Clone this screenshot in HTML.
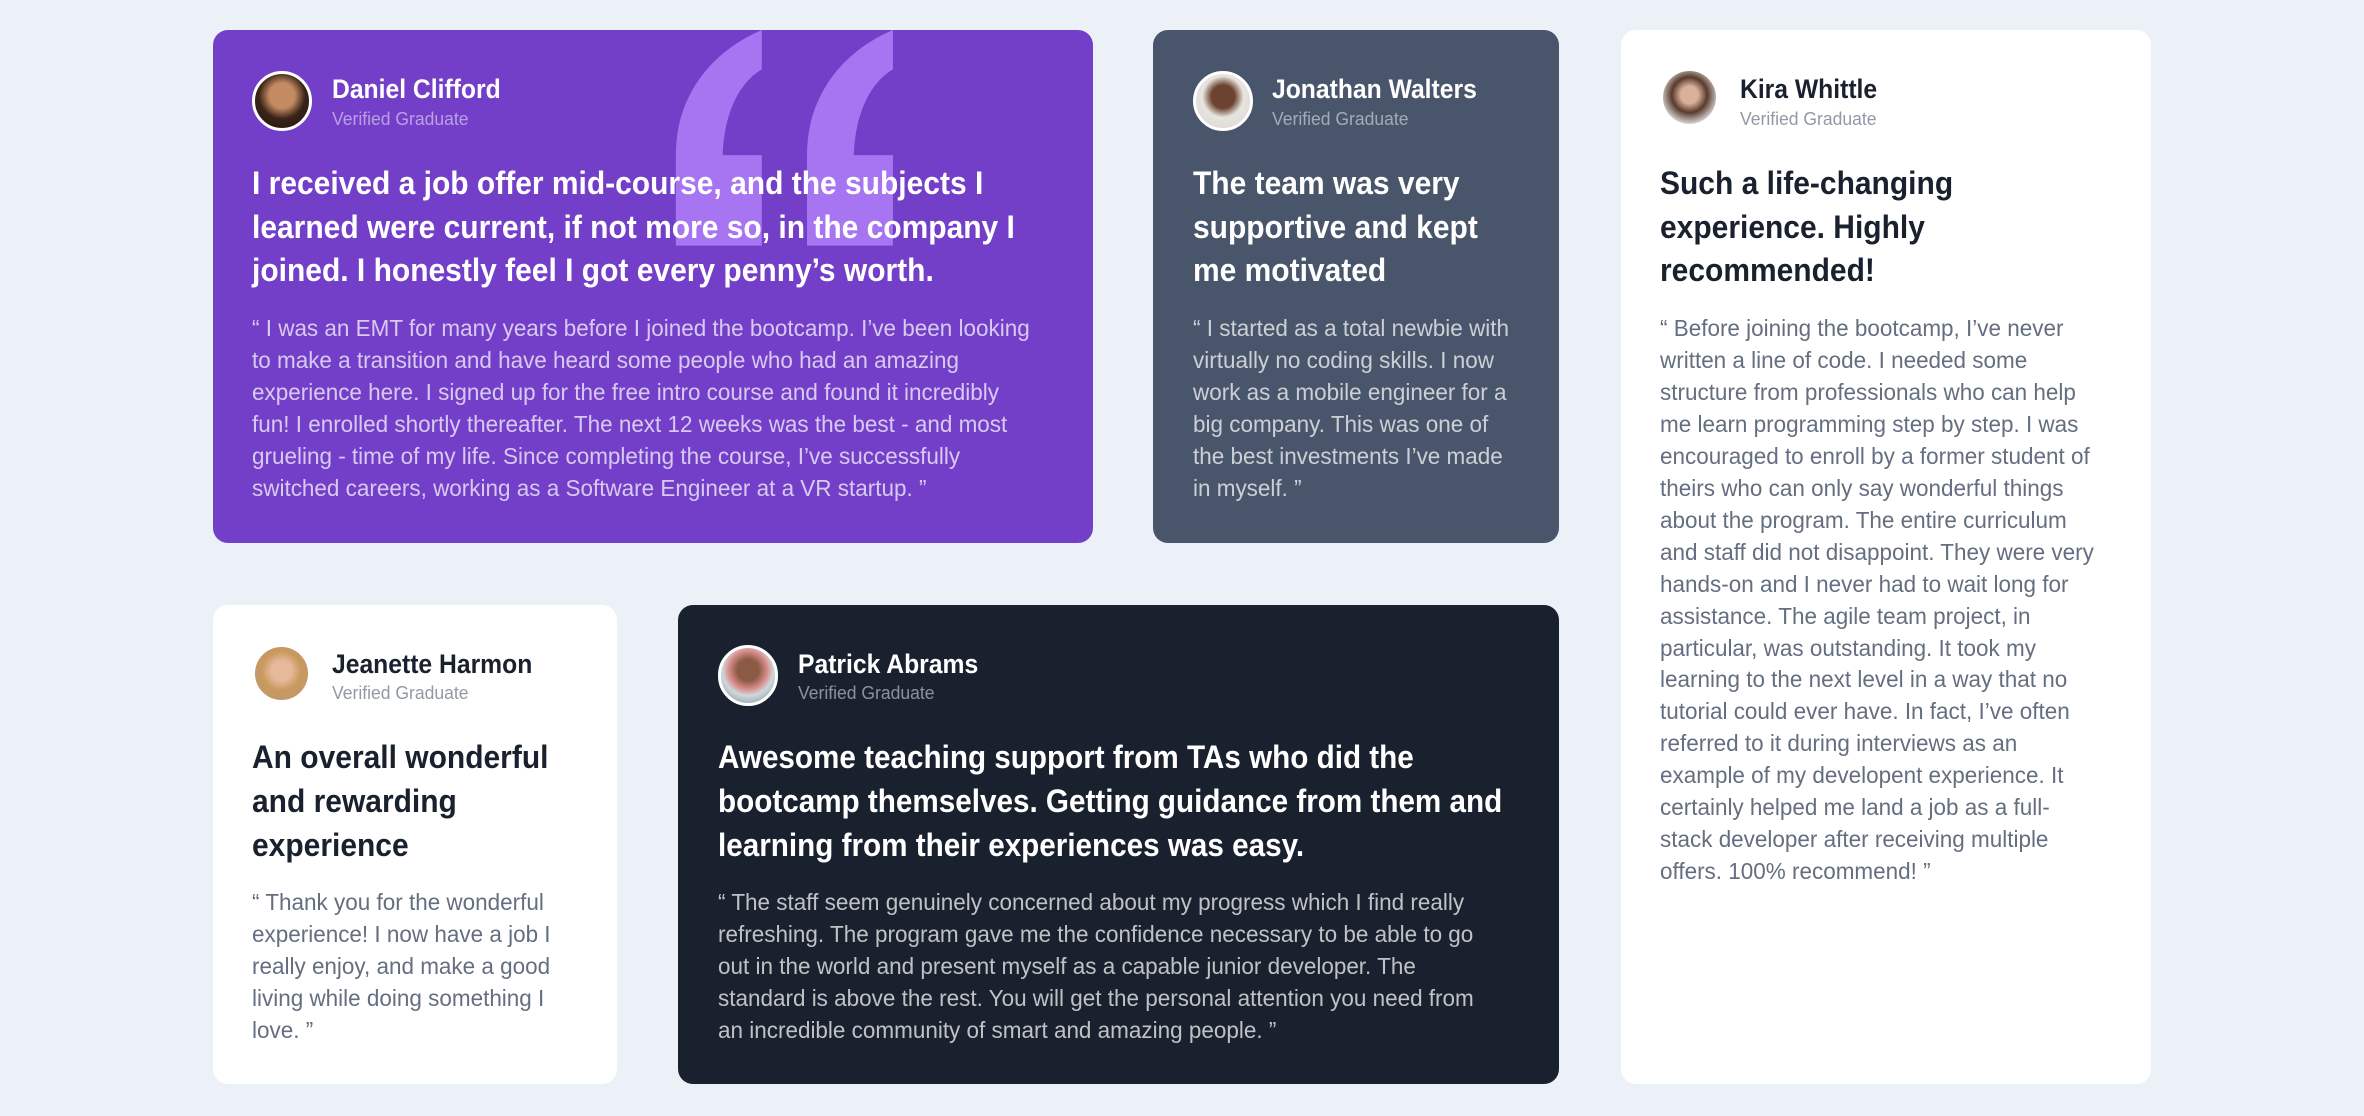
<!DOCTYPE html>
<html><head><meta charset="utf-8"><style>
html,body{margin:0;padding:0;background:#ECF1F8;width:2364px;height:1116px;overflow:hidden}
#w{position:absolute;left:0;top:0;width:1568px;height:740px;zoom:1.50765;font-family:"Liberation Sans",sans-serif}
.c{position:absolute;border-radius:10px;overflow:hidden}
.av{position:absolute;left:26px;top:27px;width:40px;height:40px;border-radius:50%;box-sizing:border-box}
.bd{border:2px solid #fff}
.nm{position:absolute;left:79px;top:28px;font-size:18px;font-weight:bold;line-height:22px;white-space:nowrap;transform:scaleX(.91);transform-origin:0 0}
.vg{position:absolute;left:79px;top:51px;font-size:12px;line-height:16px;white-space:nowrap;transform:scaleX(.97);transform-origin:0 0}
.t{position:absolute;left:26px;top:87.5px;font-size:21.5px;font-weight:bold;line-height:29px;white-space:nowrap;transform:scaleX(.925);transform-origin:0 0}
.b{position:absolute;left:26px;top:187.5px;font-size:15.3px;line-height:21.2px;white-space:nowrap;transform:scaleX(.975);transform-origin:0 0}
.dk .nm,.dk .t{color:#fff}.dk .vg{color:rgba(255,255,255,.5)}.dk .b{color:rgba(255,255,255,.72)}
.lt .nm,.lt .t{color:#19212E}.lt .vg{color:rgba(72,85,106,.6)}.lt .b{color:rgba(72,85,106,.85)}
</style></head><body><div id="w">
<div class="c dk" style="left:141px;top:20px;width:584px;height:340px;background:#733FC8">
<svg style="position:absolute;left:0;top:0" width="584" height="340"><g fill="#A775F1"><path d="M364,0 L364,26 C349,35 339,55 338,83 L364,83 L364,143 L307,143 L307,83 C307,45 329,15 364,0Z"/><path d="M451,0 L451,26 C436,35 426,55 425,83 L451,83 L451,143 L394,143 L394,83 C394,45 416,15 451,0Z"/></g></svg>
<div class="av bd" style="background:radial-gradient(circle at 50% 40%,#c48a62 0 30%,#3a2418 55%,#1d130e)"></div>
<div class="nm">Daniel Clifford</div><div class="vg">Verified Graduate</div>
<div class="t">I received a job offer mid-course, and the subjects I<br>learned were current, if not more so, in the company I<br>joined. I honestly feel I got every penny’s worth.</div>
<div class="b">“ I was an EMT for many years before I joined the bootcamp. I’ve been looking<br>to make a transition and have heard some people who had an amazing<br>experience here. I signed up for the free intro course and found it incredibly<br>fun! I enrolled shortly thereafter. The next 12 weeks was the best - and most<br>grueling - time of my life. Since completing the course, I’ve successfully<br>switched careers, working as a Software Engineer at a VR startup. ”</div>
</div>
<div class="c dk" style="left:765px;top:20px;width:269px;height:340px;background:#48556A">
<div class="av bd" style="background:radial-gradient(circle at 50% 42%,#6b4330 0 28%,#e8e4df 50%,#d8d4cf)"></div>
<div class="nm">Jonathan Walters</div><div class="vg">Verified Graduate</div>
<div class="t">The team was very<br>supportive and kept<br>me motivated</div>
<div class="b">“ I started as a total newbie with<br>virtually no coding skills. I now<br>work as a mobile engineer for a<br>big company. This was one of<br>the best investments I’ve made<br>in myself. ”</div>
</div>
<div class="c lt" style="left:1075px;top:20px;width:352px;height:699px;background:#fff">
<div class="av" style="left:28px;top:27px;width:35px;height:35px;background:radial-gradient(circle at 50% 45%,#d9b09a 0 22%,#5a3a2c 45%,#ddd 75%)"></div>
<div class="nm">Kira Whittle</div><div class="vg">Verified Graduate</div>
<div class="t">Such a life-changing<br>experience. Highly<br>recommended!</div>
<div class="b">“ Before joining the bootcamp, I’ve never<br>written a line of code. I needed some<br>structure from professionals who can help<br>me learn programming step by step. I was<br>encouraged to enroll by a former student of<br>theirs who can only say wonderful things<br>about the program. The entire curriculum<br>and staff did not disappoint. They were very<br>hands-on and I never had to wait long for<br>assistance. The agile team project, in<br>particular, was outstanding. It took my<br>learning to the next level in a way that no<br>tutorial could ever have. In fact, I’ve often<br>referred to it during interviews as an<br>example of my developent experience. It<br>certainly helped me land a job as a full-<br>stack developer after receiving multiple<br>offers. 100% recommend! ”</div>
</div>
<div class="c lt" style="left:141px;top:401px;width:268px;height:318px;background:#fff">
<div class="av" style="left:28px;top:28px;width:35px;height:35px;background:radial-gradient(circle at 50% 45%,#e6b99b 0 25%,#c9995d 50%,#b89a7c)"></div>
<div class="nm">Jeanette Harmon</div><div class="vg">Verified Graduate</div>
<div class="t">An overall wonderful<br>and rewarding<br>experience</div>
<div class="b">“ Thank you for the wonderful<br>experience! I now have a job I<br>really enjoy, and make a good<br>living while doing something I<br>love. ”</div>
</div>
<div class="c dk" style="left:450px;top:401px;width:584px;height:318px;background:#19212E">
<div class="av bd" style="background:radial-gradient(circle at 50% 40%,#8a5a44 0 25%,#d98c8a 45%,#cfd8dc 60%,#6f8a96)"></div>
<div class="nm">Patrick Abrams</div><div class="vg">Verified Graduate</div>
<div class="t" style="transform:scaleX(.915)">Awesome teaching support from TAs who did the<br>bootcamp themselves. Getting guidance from them and<br>learning from their experiences was easy.</div>
<div class="b">“ The staff seem genuinely concerned about my progress which I find really<br>refreshing. The program gave me the confidence necessary to be able to go<br>out in the world and present myself as a capable junior developer. The<br>standard is above the rest. You will get the personal attention you need from<br>an incredible community of smart and amazing people. ”</div>
</div>
</div></body></html>
